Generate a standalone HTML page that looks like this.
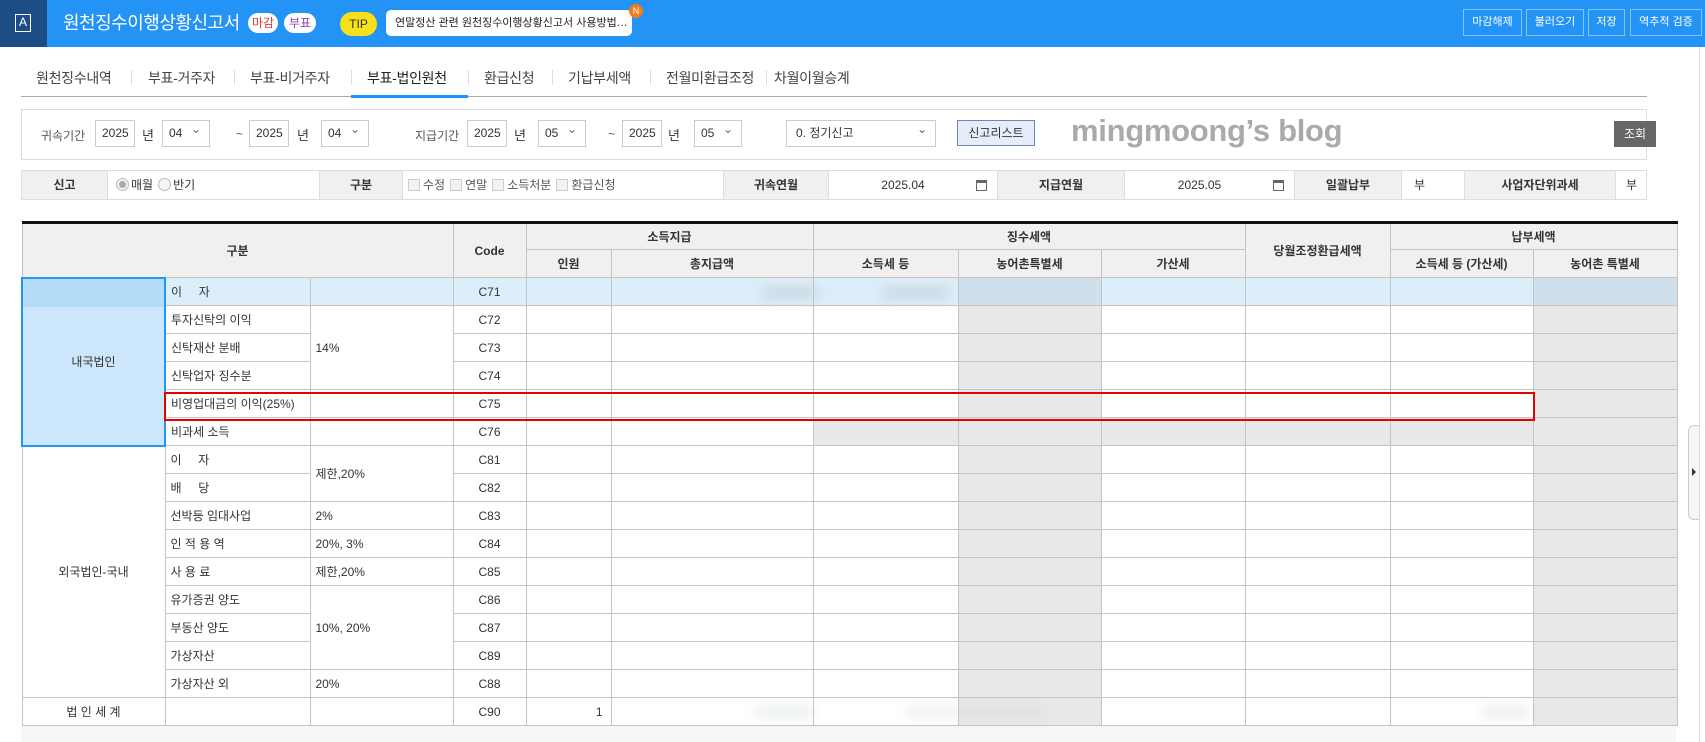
<!DOCTYPE html>
<html><head><meta charset="utf-8">
<style>
*{box-sizing:border-box;margin:0;padding:0}
body{width:1705px;height:742px;overflow:hidden;background:#fff;font-family:"Liberation Sans","Noto Sans CJK KR",sans-serif;color:#333;position:relative}
.a{position:absolute}
.hdr{left:0;top:0;width:1705px;height:47px;background:#2393f5}
.logo{left:0;top:0;width:47px;height:47px;background:#1c4d84}
.logo div{position:absolute;left:15px;top:14px;width:16px;height:18px;border:1.5px solid #fff;color:#fff;font-size:12px;text-align:center;line-height:15px}
.title{left:63px;top:11px;color:#fff;font-size:18px;line-height:24px;letter-spacing:-0.5px}
.badge{top:13px;height:20px;border-radius:10px;background:#fff;font-size:12px;line-height:20px;text-align:center}
.tb{top:9px;height:27px;border:1px solid rgba(255,255,255,.45);color:#fff;font-size:11px;line-height:25px;text-align:center}
.tab{top:68px;font-size:14px;color:#444;line-height:20px;letter-spacing:-0.3px}
.sep{top:70px;width:1px;height:15px;background:#ddd}
.box{background:#fff;border:1px solid #ccc;height:27px;top:120px;font-size:12px;line-height:25px;padding-left:6px}
.sel::after{content:"⌄";position:absolute;right:8px;top:-4px;font-size:12px;color:#666}
.lbl{top:127px;font-size:12px;color:#555}
.irow{left:21px;top:170px;width:1626px;height:30px;border:1px solid #ddd;display:flex;font-size:12px}
.irow div{height:28px;line-height:28px;border-right:1px solid #ddd}
.g{background:#f0f0f0;text-align:center;font-weight:bold;color:#333}
.cb{display:inline-block;width:12px;height:12px;border:1px solid #ccc;background:#f2f2f2;vertical-align:-2px;margin:0 3px 0 5px}
.rd{display:inline-block;width:13px;height:13px;border:1px solid #bbb;border-radius:50%;background:#f4f4f4;vertical-align:-2px;margin:0 2px 0 5px;position:relative}
table{position:absolute;left:21px;top:221px;border-collapse:collapse;table-layout:fixed;width:1655px;border-top:3px solid #111;font-size:12px}
td,th{border:1px solid #c4c4c4;height:28px;padding:0 5px;white-space:nowrap;overflow:hidden}
th{background:#f0f0f0;font-weight:bold;color:#333;font-size:12px}
thead tr:first-child th{height:27px}
thead tr:nth-child(2) th{height:28px}
.c{text-align:center}
.gr{background:#e8e8e8}
.sk{background:#ddeefb}
.skg{background:#cfdfeb}
.blur{position:absolute;background:#bcc6cc;filter:blur(6px);border-radius:10px}
</style></head><body>
<div class="a hdr"></div>
<div class="a logo"><div>A</div></div>
<div class="a title">원천징수이행상황신고서</div>
<div class="a badge" style="left:248px;width:30px;color:#e53935">마감</div>
<div class="a badge" style="left:284px;width:32px;color:#8e44ad">부표</div>
<div class="a" style="left:340px;top:12px;width:37px;height:24px;border-radius:12px;background:#f7e11b;font-size:12px;line-height:24px;text-align:center;color:#333">TIP</div>
<div class="a" style="left:386px;top:10px;width:246px;height:26px;border-radius:5px;background:#fff;font-size:11px;line-height:26px;padding-left:9px;color:#222">연말정산 관련 원천징수이행상황신고서 사용방법…</div>
<div class="a" style="left:629px;top:4px;width:14px;height:14px;border-radius:7px;background:#f07c1a;color:#fff;font-size:9px;line-height:14px;text-align:center">N</div>
<div class="a tb" style="left:1463px;width:59px">마감해제</div>
<div class="a tb" style="left:1526px;width:58px">불러오기</div>
<div class="a tb" style="left:1588px;width:37px">저장</div>
<div class="a tb" style="left:1630px;width:72px">역추적 검증</div>

<div class="a tab" style="left:36px">원천징수내역</div><div class="a sep" style="left:131px"></div>
<div class="a tab" style="left:148px">부표-거주자</div><div class="a sep" style="left:234px"></div>
<div class="a tab" style="left:250px">부표-비거주자</div><div class="a sep" style="left:351px"></div>
<div class="a tab" style="left:367px;color:#222">부표-법인원천</div><div class="a sep" style="left:468px"></div>
<div class="a tab" style="left:484px">환급신청</div><div class="a sep" style="left:552px"></div>
<div class="a tab" style="left:568px">기납부세액</div><div class="a sep" style="left:650px"></div>
<div class="a tab" style="left:666px">전월미환급조정</div><div class="a sep" style="left:766px"></div>
<div class="a tab" style="left:774px">차월이월승계</div>
<div class="a" style="left:21px;top:96px;width:1626px;height:1px;background:#aaa"></div>
<div class="a" style="left:351px;top:95px;width:117px;height:3px;background:#1e90ff"></div>

<div class="a" style="left:21px;top:109px;width:1626px;height:51px;border:1px solid #ddd;background:#fff"></div>
<div class="a lbl" style="left:41px">귀속기간</div>
<div class="a box" style="left:95px;width:40px">2025</div>
<div class="a lbl" style="left:142px;font-size:13px;color:#333;top:125px">년</div>
<div class="a box sel" style="left:162px;width:48px">04</div>
<div class="a lbl" style="left:236px">~</div>
<div class="a box" style="left:249px;width:40px">2025</div>
<div class="a lbl" style="left:297px;font-size:13px;color:#333;top:125px">년</div>
<div class="a box sel" style="left:321px;width:48px">04</div>
<div class="a lbl" style="left:415px">지급기간</div>
<div class="a box" style="left:467px;width:40px">2025</div>
<div class="a lbl" style="left:514px;font-size:13px;color:#333;top:125px">년</div>
<div class="a box sel" style="left:538px;width:48px">05</div>
<div class="a lbl" style="left:608px">~</div>
<div class="a box" style="left:622px;width:40px">2025</div>
<div class="a lbl" style="left:668px;font-size:13px;color:#333;top:125px">년</div>
<div class="a box sel" style="left:694px;width:48px">05</div>
<div class="a box sel" style="left:786px;width:150px;padding-left:9px">0. 정기신고</div>
<div class="a" style="left:957px;top:120px;width:78px;height:26px;border:1px solid #6f86b5;background:#e6ecfa;font-size:12px;line-height:24px;text-align:center">신고리스트</div>
<div class="a" style="left:1071px;top:113px;font-size:31px;font-weight:bold;color:#aaa;line-height:36px;letter-spacing:-0.3px">mingmoong’s blog</div>
<div class="a" style="left:1614px;top:121px;width:42px;height:26px;background:#666;color:#fff;font-size:12px;line-height:26px;text-align:center">조회</div>

<div class="a irow">
<div class="g" style="width:86px">신고</div>
<div style="width:212px;padding-left:3px"><span class="rd" style="background:radial-gradient(#aaa 3px,#f4f4f4 4px)"></span>매월<span class="rd"></span>반기</div>
<div class="g" style="width:83px">구분</div>
<div style="width:321px;color:#555"><span class="cb"></span>수정<span class="cb"></span>연말<span class="cb"></span>소득처분<span class="cb"></span>환급신청</div>
<div class="g" style="width:105px">귀속연월</div>
<div style="width:169px;position:relative;text-align:center;padding-right:20px">2025.04<span style="position:absolute;right:10px;top:9px;width:11px;height:11px;border:1px solid #666;border-top:3px solid #666"></span></div>
<div class="g" style="width:127px">지급연월</div>
<div style="width:170px;position:relative;text-align:center;padding-right:20px">2025.05<span style="position:absolute;right:10px;top:9px;width:11px;height:11px;border:1px solid #666;border-top:3px solid #666"></span></div>
<div class="g" style="width:107px">일괄납부</div>
<div style="width:63px;padding-left:12px">부</div>
<div class="g" style="width:151px">사업자단위과세</div>
<div style="width:30px;border:none;padding-left:10px">부</div>
</div>

<div class="a" style="left:21px;top:725px;width:1655px;height:17px;background:#f7f7f7"></div>
<table>
<colgroup><col style="width:143px"><col style="width:145px"><col style="width:143px"><col style="width:73px"><col style="width:85px"><col style="width:202px"><col style="width:145px"><col style="width:143px"><col style="width:144px"><col style="width:145px"><col style="width:143px"><col style="width:144px"></colgroup>
<thead>
<tr><th colspan="3" rowspan="2">구분</th><th rowspan="2">Code</th><th colspan="2">소득지급</th><th colspan="3">징수세액</th><th rowspan="2">당월조정환급세액</th><th colspan="2">납부세액</th></tr>
<tr><th>인원</th><th>총지급액</th><th>소득세 등</th><th>농어촌특별세</th><th>가산세</th><th>소득세 등 (가산세)</th><th>농어촌 특별세</th></tr>
</thead>
<tbody>
<tr class="sk"><td rowspan="6" class="c" style="background:linear-gradient(#b3dcf9 0 28px,#cce7fb 28px);border:2px solid #2196f3">내국법인</td><td>이&nbsp;&nbsp;&nbsp;&nbsp;&nbsp;자</td><td></td><td class="c">C71</td><td></td><td></td><td></td><td class="skg"></td><td></td><td></td><td></td><td class="skg"></td></tr>
<tr><td>투자신탁의 이익</td><td rowspan="3">14%</td><td class="c">C72</td><td></td><td></td><td></td><td class="gr"></td><td></td><td></td><td></td><td class="gr"></td></tr>
<tr><td>신탁재산 분배</td><td class="c">C73</td><td></td><td></td><td></td><td class="gr"></td><td></td><td></td><td></td><td class="gr"></td></tr>
<tr><td>신탁업자 징수분</td><td class="c">C74</td><td></td><td></td><td></td><td class="gr"></td><td></td><td></td><td></td><td class="gr"></td></tr>
<tr><td>비영업대금의 이익(25%)</td><td></td><td class="c">C75</td><td></td><td></td><td></td><td class="gr"></td><td></td><td></td><td></td><td class="gr"></td></tr>
<tr><td>비과세 소득</td><td></td><td class="c">C76</td><td></td><td></td><td class="gr"></td><td class="gr"></td><td class="gr"></td><td class="gr"></td><td class="gr"></td><td class="gr"></td></tr>
<tr><td rowspan="9" class="c">외국법인-국내</td><td>이&nbsp;&nbsp;&nbsp;&nbsp;&nbsp;자</td><td rowspan="2">제한,20%</td><td class="c">C81</td><td></td><td></td><td></td><td class="gr"></td><td></td><td></td><td></td><td class="gr"></td></tr>
<tr><td>배&nbsp;&nbsp;&nbsp;&nbsp;&nbsp;당</td><td class="c">C82</td><td></td><td></td><td></td><td class="gr"></td><td></td><td></td><td></td><td class="gr"></td></tr>
<tr><td>선박등 임대사업</td><td>2%</td><td class="c">C83</td><td></td><td></td><td></td><td class="gr"></td><td></td><td></td><td></td><td class="gr"></td></tr>
<tr><td>인 적 용 역</td><td>20%, 3%</td><td class="c">C84</td><td></td><td></td><td></td><td class="gr"></td><td></td><td></td><td></td><td class="gr"></td></tr>
<tr><td>사 용 료</td><td>제한,20%</td><td class="c">C85</td><td></td><td></td><td></td><td class="gr"></td><td></td><td></td><td></td><td class="gr"></td></tr>
<tr><td>유가증권 양도</td><td rowspan="3">10%, 20%</td><td class="c">C86</td><td></td><td></td><td></td><td class="gr"></td><td></td><td></td><td></td><td class="gr"></td></tr>
<tr><td>부동산 양도</td><td class="c">C87</td><td></td><td></td><td></td><td class="gr"></td><td></td><td></td><td></td><td class="gr"></td></tr>
<tr><td>가상자산</td><td class="c">C89</td><td></td><td></td><td></td><td class="gr"></td><td></td><td></td><td></td><td class="gr"></td></tr>
<tr><td>가상자산 외</td><td>20%</td><td class="c">C88</td><td></td><td></td><td></td><td class="gr"></td><td></td><td></td><td></td><td class="gr"></td></tr>
<tr><td class="c">법 인 세 계</td><td></td><td></td><td class="c">C90</td><td style="text-align:right;padding-right:8px">1</td><td></td><td></td><td class="gr"></td><td></td><td></td><td></td><td class="gr"></td></tr>
</tbody></table>
<div class="blur" style="left:760px;top:286px;width:60px;height:14px;opacity:.5"></div>
<div class="blur" style="left:880px;top:286px;width:70px;height:14px;opacity:.5"></div>
<div class="blur" style="left:755px;top:706px;width:60px;height:12px;opacity:.3"></div>
<div class="blur" style="left:905px;top:706px;width:140px;height:12px;opacity:.25"></div>
<div class="blur" style="left:1480px;top:706px;width:50px;height:12px;opacity:.3"></div>
<div class="a" style="left:164px;top:392px;width:1371px;height:29px;border:2px solid #e60000"></div>
<div class="a" style="left:1699px;top:47px;width:1px;height:695px;background:#ddd"></div>
<div class="a" style="left:1688px;top:425px;width:11px;height:95px;border:1px solid #ccc;border-right:none;border-radius:6px 0 0 6px;background:#f6f6f6"></div>
<div class="a" style="left:1692px;top:468px;width:0;height:0;border-left:4px solid #333;border-top:4px solid transparent;border-bottom:4px solid transparent"></div>
</body></html>
